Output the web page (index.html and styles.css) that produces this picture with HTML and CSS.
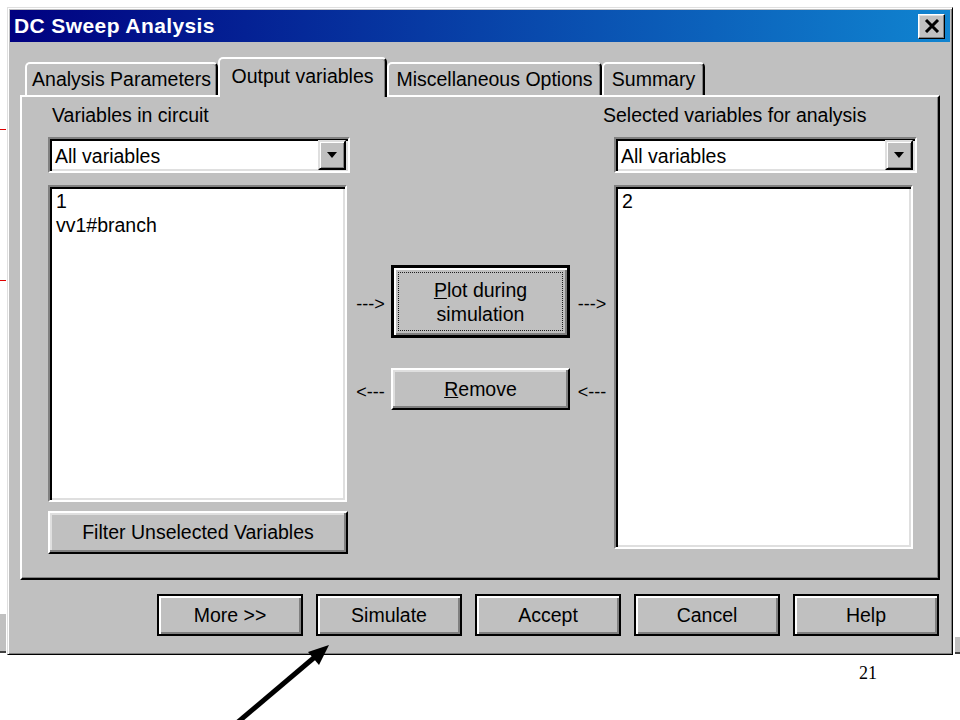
FILE: index.html
```html
<!DOCTYPE html>
<html lang="en">
<head>
    <meta charset="UTF-8">
    <meta name="viewport" content="width=device-width, initial-scale=1.0">
    <title>DC Sweep Analysis</title>
    <link rel="stylesheet" href="styles.css">
</head>
<body>
    <div class="slide">
        <div class="tick tick-top"></div>
        <div class="tick tick-bottom"></div>
        <div class="behind behind-left"></div>
        <div class="behind behind-right"></div>

        <div class="dialog">
            <div class="titlebar">
                <span class="title">DC Sweep Analysis</span>
                <button class="close-btn" aria-label="Close">
                    <svg width="16" height="14" viewBox="0 0 16 14">
                        <path d="M2 1 L14 13 M14 1 L2 13" stroke="#000" stroke-width="3" fill="none"/>
                    </svg>
                </button>
            </div>

            <div class="tabs">
                <div class="tab tab-params">Analysis Parameters</div>
                <div class="tab tab-output active">Output variables</div>
                <div class="tab tab-misc">Miscellaneous Options</div>
                <div class="tab tab-summary">Summary</div>
            </div>

            <div class="panel">
                <div class="col col-left">
                    <div class="label">Variables in circuit</div>
                    <div class="combo">
                        <span class="combo-text">All variables</span>
                        <span class="drop"><span class="arrow-down"></span></span>
                    </div>
                    <ul class="listbox list-left">
                        <li>1</li>
                        <li>vv1#branch</li>
                    </ul>
                    <button class="btn btn-filter">Filter Unselected Variables</button>
                </div>

                <div class="col col-mid">
                    <div class="move-row row-plot">
                        <span class="hint hint-in">---&gt;</span>
                        <button class="btn-default">
                            <span class="focus"><span><u>P</u>lot during<br>simulation</span></span>
                        </button>
                        <span class="hint hint-out">---&gt;</span>
                    </div>
                    <div class="move-row row-remove">
                        <span class="hint hint-in">&lt;---</span>
                        <button class="btn btn-remove"><u>R</u>emove</button>
                        <span class="hint hint-out">&lt;---</span>
                    </div>
                </div>

                <div class="col col-right">
                    <div class="label label-right">Selected variables for analysis</div>
                    <div class="combo">
                        <span class="combo-text">All variables</span>
                        <span class="drop"><span class="arrow-down"></span></span>
                    </div>
                    <ul class="listbox list-right">
                        <li>2</li>
                    </ul>
                </div>
            </div>

            <div class="actions">
                <button class="btn-action">More &gt;&gt;</button>
                <button class="btn-action">Simulate</button>
                <button class="btn-action">Accept</button>
                <button class="btn-action">Cancel</button>
                <button class="btn-action">Help</button>
            </div>
        </div>

        <div class="page-num">21</div>

        <svg class="pointer" width="960" height="720" viewBox="0 0 960 720">
            <line x1="238" y1="722" x2="316" y2="656" stroke="#000" stroke-width="5"/>
            <polygon points="329,645 308,652 319,665" fill="#000"/>
        </svg>
    </div>
</body>
</html>
```

FILE: styles.css
```css
* {
    box-sizing: border-box;
}
html, body {
    margin: 0;
    padding: 0;
}
body {
    background-color: #fff;
    font-family: "Liberation Sans", Arial, sans-serif;
    font-size: 19.5px;
    color: #000;
}
button {
    font-family: inherit;
    font-size: inherit;
    color: #000;
    background-color: #c0c0c0;
    padding: 0;
    margin: 0;
}
.slide {
    position: relative;
    width: 960px;
    height: 720px;
    overflow: hidden;
    padding: 7px 0 0 7px;
}

/* bits of the slide behind the dialog */
.tick {
    position: absolute;
    left: 0;
    width: 6px;
    height: 1px;
    background-color: #e00000;
}
.tick-top {
    top: 129px;
}
.tick-bottom {
    top: 280px;
}
.behind {
    position: absolute;
    top: 613px;
    height: 40px;
    background-color: #c0c0c0;
    border-top: 1px solid #fff;
    border-bottom: 2px solid #404040;
}
.behind-left {
    left: 0;
    width: 6px;
}
.behind-right {
    right: 0;
    width: 5px;
    top: 636px;
    height: 18px;
}

/* window */
.dialog {
    width: 946px;
    height: 648px;
    background-color: #c0c0c0;
    border: 1px solid;
    border-color: #dfdfdf #000 #000 #dfdfdf;
    box-shadow: inset 1px 1px #fff, inset -1px -1px #808080;
    padding: 2px;
    display: flex;
    flex-direction: column;
}
.titlebar {
    height: 32px;
    flex-shrink: 0;
    display: flex;
    align-items: center;
    justify-content: space-between;
    padding: 0 5px 0 4px;
    background: linear-gradient(to right, #000080, #1084d0);
}
.title {
    color: #fff;
    font-weight: bold;
    font-size: 21px;
    letter-spacing: 0.4px;
}
.close-btn {
    width: 27px;
    height: 25px;
    border: 1px solid;
    border-color: #fff #000 #000 #fff;
    box-shadow: inset -1px -1px #808080, inset 1px 1px #dfdfdf;
    display: flex;
    align-items: center;
    justify-content: center;
}

/* tabs */
.tabs {
    position: relative;
    z-index: 1;
    display: flex;
    align-items: flex-end;
    height: 40px;
    flex-shrink: 0;
    margin-top: 15px;
    margin-bottom: -2px;
    padding-left: 15px;
}
.tab {
    height: 33px;
    margin-bottom: 2px;
    border: 2px solid;
    border-bottom: none;
    border-color: #fff #000 transparent #fff;
    border-radius: 5px 5px 0 0;
    box-shadow: inset -1px 0 #808080;
    background-color: #c0c0c0;
    display: flex;
    align-items: center;
    justify-content: center;
    white-space: nowrap;
}
.tab.active {
    height: 40px;
    margin-bottom: 0;
    padding-bottom: 3px;
}
.tab-params {
    width: 193px;
}
.tab-output {
    width: 169px;
}
.tab-misc {
    width: 215px;
}
.tab-summary {
    width: 103px;
}

/* tab page */
.panel {
    height: 485px;
    flex-shrink: 0;
    margin: 0 10px;
    border: 2px solid;
    border-color: #fff #000 #000 #fff;
    box-shadow: inset -1px -1px #808080;
    display: flex;
    padding: 6px 0 0 26px;
}
.col {
    display: flex;
    flex-direction: column;
}
.col-left {
    width: 302px;
}
.col-mid {
    width: 264px;
    padding-top: 162px;
}
.col-right {
    width: 303px;
}
.label {
    height: 24px;
    line-height: 24px;
    padding-left: 4px;
    white-space: nowrap;
}
.label-right {
    margin-left: -11px;
    padding-left: 0;
}
.combo {
    height: 36px;
    margin-top: 10px;
    background-color: #fff;
    border: 2px solid;
    border-color: #808080 #fff #fff #808080;
    box-shadow: inset 2px 2px #000, inset -2px -2px #dfdfdf;
    display: flex;
    align-items: center;
    padding-left: 5px;
}
.combo-text {
    flex: 1;
    padding-top: 3px;
}
.drop {
    width: 28px;
    height: 30px;
    margin-right: 2px;
    background-color: #c0c0c0;
    border: 2px solid;
    border-color: #dfdfdf #000 #000 #dfdfdf;
    box-shadow: inset 1px 1px #fff, inset -1px -1px #808080;
    display: flex;
    align-items: center;
    justify-content: center;
}
.arrow-down {
    width: 0;
    height: 0;
    border-left: 5px solid transparent;
    border-right: 5px solid transparent;
    border-top: 6px solid #000;
}
.listbox {
    list-style-type: none;
    margin: 12px 0 0 0;
    padding: 2px 0 0 6px;
    background-color: #fff;
    border: 2px solid;
    border-color: #808080 #fff #fff #808080;
    box-shadow: inset 2px 2px #000, inset -2px -2px #dfdfdf;
    line-height: 24px;
}
.list-left {
    width: 299px;
    height: 317px;
}
.list-right {
    width: 299px;
    height: 364px;
}

/* buttons */
.btn {
    border: 2px solid;
    border-color: #fff #000 #000 #fff;
    box-shadow: inset -2px -2px #808080, inset 2px 2px #dfdfdf;
}
.btn-filter {
    width: 300px;
    height: 43px;
    margin-top: 9px;
}
.move-row {
    display: flex;
    align-items: center;
}
.row-remove {
    margin-top: 30px;
}
.hint {
    font-size: 18px;
    text-align: center;
    padding-top: 6px;
}
.hint-in {
    width: 41px;
}
.hint-out {
    width: 44px;
}
.btn-default {
    width: 179px;
    height: 73px;
    border: 3px solid #000;
    box-shadow: inset 2px 2px #fff, inset -2px -2px #808080;
    padding: 4px;
}
.focus {
    display: flex;
    align-items: center;
    justify-content: center;
    width: 100%;
    height: 100%;
    border: 1px dotted #202020;
    line-height: 24px;
}
.btn-remove {
    width: 179px;
    height: 42px;
}
.actions {
    display: flex;
    justify-content: flex-end;
    gap: 13px;
    margin-top: 14px;
    padding-right: 11px;
}
.btn-action {
    width: 146px;
    height: 42px;
    border: 2px solid #000;
    box-shadow: inset 2px 2px #fff, inset -2px -2px #808080;
}

/* slide annotations */
.page-num {
    margin-top: 8px;
    padding-left: 852px;
    font-family: "Liberation Serif", "Times New Roman", serif;
    font-size: 18px;
    line-height: 20px;
}
.pointer {
    position: absolute;
    left: 0;
    top: 0;
    pointer-events: none;
}
```
